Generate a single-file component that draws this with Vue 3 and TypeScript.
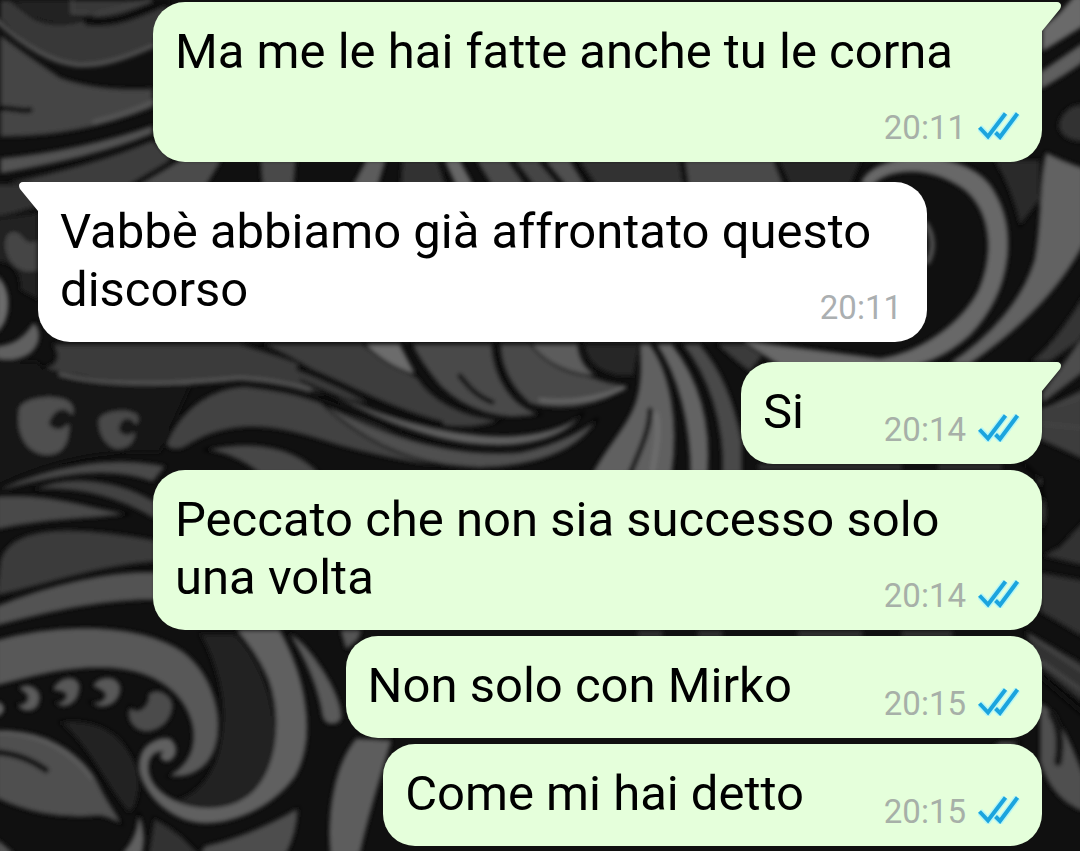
<script setup lang="ts">
interface Message {
  id: number
  text: string
  time: string
  outgoing: boolean
  tail: boolean
}

interface Shape {
  d: string
  fill: string
}

interface Line {
  d: string
  stroke: string
  width: number
}

const messages: Message[] = [
  { id: 1, text: 'Ma me le hai fatte anche tu le corna', time: '20:11', outgoing: true, tail: true },
  { id: 2, text: 'Vabbè abbiamo già affrontato questo discorso', time: '20:11', outgoing: false, tail: true },
  { id: 3, text: 'Si', time: '20:14', outgoing: true, tail: true },
  { id: 4, text: 'Peccato che non sia successo solo una volta', time: '20:14', outgoing: true, tail: false },
  { id: 5, text: 'Non solo con Mirko ', time: '20:15', outgoing: true, tail: false },
  { id: 6, text: 'Come mi hai detto', time: '20:15', outgoing: true, tail: false },
]

// Carved leaves of the wallpaper
const shapes: Shape[] = [
  // upper left
  { d: 'M0 0H170L153 46C120 62 95 67 75 65C50 62 25 45 0 20Z', fill: '#373737' },
  { d: 'M10 0H72V14L95 12C80 26 50 26 34 18Z', fill: '#242424' },
  { d: 'M0 34C25 54 45 66 60 77C90 88 120 90 153 88V108C110 125 60 138 0 137Z', fill: '#454545' },
  { d: 'M0 158C60 152 110 140 153 125V134C110 152 60 163 0 174Z', fill: '#525252' },
  { d: 'M0 184C60 172 110 158 153 140L172 160L128 186H0Z', fill: '#3e3e3e' },
  { d: 'M180 160H222L206 186H136Z', fill: '#4b4b4b' },
  { d: 'M-4 184H30L42 206C20 212 10 216 -4 218Z', fill: '#303030' },
  // strip between the first two bubbles
  { d: 'M260 160H296L294 186H262Z', fill: '#484848' },
  { d: 'M366 160H386L378 186H352Z', fill: '#5c5c5c' },
  { d: 'M402 160H438L446 186H400Z', fill: '#333' },
  { d: 'M444 160H460L474 186H456Z', fill: '#666' },
  { d: 'M476 160H508L526 186H492Z', fill: '#4a4a4a' },
  { d: 'M514 160H538L560 186H534Z', fill: '#444' },
  { d: 'M544 160H570L586 186H566Z', fill: '#505050' },
  { d: 'M578 160H680L684 186H596Z', fill: '#333' },
  { d: 'M684 160H774L784 186H688Z', fill: '#4a4a4a' },
  { d: 'M778 160H862L850 186H790Z', fill: '#262626' },
  // left edge curls
  { d: 'M-4 218L38 212V300L20 290C20 270 10 262 -4 262Z', fill: '#222' },
  { d: 'M4 250C2 236 8 226 20 232C26 240 30 244 38 238V272C22 276 8 268 4 250Z', fill: '#454545' },
  { d: 'M-4 274C14 290 12 320 -4 334Z', fill: '#6c6c6c' },
  { d: 'M-4 346C20 344 28 330 34 322C42 330 42 344 30 354C18 362 6 361 -4 359Z', fill: '#606060' },
  // middle left
  { d: 'M-4 362H36C80 390 130 390 190 386L160 452C110 450 60 456 -4 486Z', fill: '#191919' },
  { d: 'M52 344H240C300 360 350 384 420 414C350 404 300 384 240 380C180 388 110 386 40 368C58 366 60 356 52 344Z', fill: '#3b3b3b' },
  { d: 'M260 344H362C380 358 404 370 418 378C430 398 460 416 500 420C470 434 420 426 380 408C340 390 300 358 260 344Z', fill: '#3e3e3e' },
  { d: 'M166 444C180 410 210 386 250 386C300 390 350 414 400 434C450 450 480 458 510 462C460 474 400 462 340 446C290 430 240 414 190 444C180 452 168 450 166 444Z', fill: '#424242' },
  { d: 'M204 450C240 442 290 440 320 474H260C245 462 225 452 204 450Z', fill: '#464646' },
  { d: 'M364 344H400L416 375C396 370 378 358 364 344Z', fill: '#6c6c6c' },
  { d: 'M412 344H492C494 378 512 406 540 414C500 424 462 408 440 386C428 372 418 358 412 344Z', fill: '#484848' },
  { d: 'M500 344H536C552 364 580 374 608 382L628 386C600 408 560 412 530 404C510 388 500 364 500 344Z', fill: '#4a4a4a' },
  { d: 'M530 344H578C580 364 590 372 598 376C570 376 546 364 530 344Z', fill: '#5c5c5c' },
  { d: 'M584 344H640L634 376C606 378 586 366 584 344Z', fill: '#262626' },
  { d: 'M300 380C390 420 440 434 500 436C540 436 570 426 584 412C566 440 520 450 470 444C420 438 370 416 300 380Z', fill: '#5e5e5e' },
  { d: 'M320 402C400 444 460 456 520 452C560 444 590 426 598 418C580 450 540 466 480 468C420 466 370 448 320 402Z', fill: '#505050' },
  { d: 'M636 400C642 380 640 362 640 344H650C670 372 680 420 672 474H592C606 446 628 426 636 400Z', fill: '#606060' },
  { d: 'M656 344H672C700 380 712 424 708 474H690C690 424 678 376 656 344Z', fill: '#646464' },
  { d: 'M682 344H700C722 370 734 400 742 440V474H722C724 424 708 376 682 344Z', fill: '#484848' },
  { d: 'M716 344H772L750 372C738 364 728 354 716 344Z', fill: '#3a3a3a' },
  // dotted curls
  { d: 'M18 408C24 396 50 394 64 398C76 402 76 412 72 418C66 404 52 412 50 424C58 432 66 426 70 420C72 446 62 456 46 456C26 454 14 436 18 408Z', fill: '#505050' },
  { d: 'M98 418C104 410 126 406 138 414C142 420 138 424 136 428C130 414 120 420 120 430C126 438 134 432 136 428C138 444 128 450 116 450C104 446 96 434 98 418Z', fill: '#484848' },
  { d: 'M-4 490C50 466 110 454 166 466L153 482C110 466 60 474 -4 492Z', fill: '#484848' },
  { d: 'M32 490C70 472 120 480 156 502V520C120 498 80 486 32 490Z', fill: '#424242' },
  { d: 'M-4 496C50 492 90 508 130 514C90 520 50 518 -4 530Z', fill: '#484848' },
  { d: 'M0 560C10 528 60 522 156 540V562C100 566 50 584 -4 596Z', fill: '#3a3a3a' },
  { d: 'M-4 606C50 584 110 570 156 572V600C100 600 50 612 -4 626Z', fill: '#525252' },
  // large scroll at the lower left
  { d: 'M-4 640C60 622 140 622 184 652C214 676 224 716 216 746C210 768 190 780 168 776C186 766 196 750 192 726C184 690 150 668 100 668C60 668 28 678 -4 686Z', fill: '#585858' },
  { d: 'M200 634H236C280 680 286 760 262 796C250 808 236 812 216 812C200 812 180 808 168 800C190 800 214 780 220 740C228 700 214 660 200 634Z', fill: '#222' },
  { d: 'M236 630H280C306 676 318 736 296 776C270 812 220 832 184 820C150 806 134 776 140 756C144 742 160 736 170 738C180 746 178 758 168 762C160 762 158 756 162 752C146 752 144 776 160 790C180 808 220 814 246 796C276 774 282 720 268 680C260 660 248 644 236 630Z', fill: '#606060' },
  { d: 'M288 632C310 644 340 690 342 716C342 726 324 728 322 716C318 690 306 660 288 632Z', fill: '#5a5a5a' },
  { d: 'M340 630H362L358 640L346 650Z', fill: '#555' },
  { d: 'M60 722C100 716 126 736 138 770C142 790 136 812 128 812C108 790 92 750 60 722Z', fill: '#242424' },
  { d: 'M-4 732C40 726 80 750 98 782C106 800 116 812 122 824C112 820 106 816 98 816C60 820 24 812 -4 798Z', fill: '#505050' },
  { d: 'M-4 838L16 855H-4Z', fill: '#555' },
  { d: 'M138 812C144 824 146 840 142 855H120C134 842 138 828 138 812Z', fill: '#606060' },
  { d: 'M154 818C180 832 190 844 200 855H148Z', fill: '#303030' },
  { d: 'M204 846C240 838 270 824 298 808C298 824 294 840 286 855H200Z', fill: '#4e4e4e' },
  { d: 'M356 738C334 764 326 812 330 855H360C370 810 380 780 392 740Z', fill: '#5d5d5d' },
  { d: 'M-4 700C6 704 8 712 -4 718Z', fill: '#666' },
  { d: 'M18 688C30 680 42 690 40 700C38 714 22 714 16 704C24 706 30 700 26 694Z', fill: '#5c5c5c' },
  { d: 'M52 690C60 674 78 674 80 686C80 704 64 712 54 702C64 704 70 694 62 692Z', fill: '#585858' },
  { d: 'M92 686C100 674 118 674 121 688C120 706 102 712 90 702C104 704 110 694 100 690Z', fill: '#585858' },
  { d: 'M130 706C136 716 150 706 148 694C158 686 174 694 173 708C170 728 150 736 138 730C128 724 126 714 130 706Z', fill: '#4b4b4b' },
  // right side
  { d: 'M1042 28L1058 14L1074 -4H1084V26L1042 52Z', fill: '#6a6a6a' },
  { d: 'M1040 72L1084 42V62C1068 74 1054 82 1040 90Z', fill: '#5e5e5e' },
  { d: 'M1058 126C1060 112 1070 104 1084 104V142C1068 142 1060 136 1058 126Z', fill: '#333' },
  { d: 'M860 184C872 150 960 146 990 184C1020 226 1014 290 970 336C948 356 920 368 890 370L780 366L740 340L880 358C920 352 960 324 978 290C994 252 990 212 964 190C930 166 890 168 872 186Z', fill: '#686868' },
  { d: 'M994 160H1040V200L1020 226C1014 200 1006 180 994 160Z', fill: '#2b2b2b' },
  { d: 'M1046 152C1060 160 1072 164 1084 168V244C1060 290 1020 330 970 364H948C990 336 1022 300 1034 260C1042 220 1038 180 1046 152Z', fill: '#626262' },
  { d: 'M1084 294V338L1050 362H1030C1050 346 1066 324 1084 294Z', fill: '#343434' },
  { d: 'M1084 334V372L1042 404V392L1060 368Z', fill: '#4d4d4d' },
  { d: 'M1040 410L1084 388V460L1040 440Z', fill: '#3c3c3c' },
  { d: 'M1020 462C1044 474 1050 510 1042 534V480Z', fill: '#606060' },
  { d: 'M1060 546L1084 520V566L1042 556Z', fill: '#333' },
  { d: 'M1040 572L1084 580V638L1040 612Z', fill: '#303030' },
  { d: 'M1024 630L1084 664V704L1040 668Z', fill: '#303030' },
  { d: 'M1040 702C1060 714 1072 744 1084 776V812C1060 804 1046 784 1040 762Z', fill: '#505050' },
  { d: 'M1000 742H1022L1010 748H990Z', fill: '#555' },
]

// Ridges catching the light and deep grooves
const lines: Line[] = [
  { d: 'M-4 20C24 46 50 62 76 65C100 67 126 58 153 46', stroke: '#525252', width: 4 },
  { d: 'M72 0V13H100C124 8 140 2 150 0', stroke: '#444', width: 3 },
  { d: 'M88 21C116 24 140 12 164 2', stroke: '#0b0b0b', width: 9 },
  { d: 'M-4 108C12 107 20 112 30 110', stroke: '#060606', width: 5 },
  { d: 'M94 122C118 116 138 109 153 102', stroke: '#585858', width: 4 },
  { d: 'M60 374C110 388 180 384 240 378C270 380 290 384 310 390', stroke: '#5c5c5c', width: 3 },
  { d: 'M250 386C310 392 350 410 400 430', stroke: '#0a0a0a', width: 4 },
  { d: 'M300 368C340 382 380 408 440 424', stroke: '#0a0a0a', width: 7 },
  { d: 'M460 376C468 386 476 396 492 402', stroke: '#0a0a0a', width: 5 },
  { d: 'M540 400C570 404 600 398 624 388', stroke: '#6c6c6c', width: 3 },
  { d: 'M650 410C650 430 640 450 630 474', stroke: '#080808', width: 5 },
  { d: 'M656 414C660 430 656 450 652 474', stroke: '#717171', width: 4 },
  { d: 'M-4 752C20 754 34 762 46 770', stroke: '#090909', width: 6 },
  { d: 'M-4 732C40 732 70 750 92 778', stroke: '#5f5f5f', width: 3 },
  { d: 'M1042 410L1084 396M1042 424L1084 428', stroke: '#484848', width: 2 },
  { d: 'M1030 636L1084 672M1042 662L1084 692', stroke: '#555', width: 2 },
  { d: 'M1040 676L1084 714', stroke: '#080808', width: 5 },
  { d: 'M1052 714C1062 730 1060 750 1058 762', stroke: '#151515', width: 8 },
  { d: 'M928 262C934 250 934 236 926 224', stroke: '#555', width: 5 },
  { d: 'M640 634H660M700 634H720M800 634H860M904 634H950', stroke: '#333', width: 6 },
  { d: 'M760 467H900M940 467H1000', stroke: '#333', width: 5 },
]
</script>

<template>
  <main class="chat">
    <svg class="wallpaper" viewBox="0 0 1080 851" preserveAspectRatio="xMidYMid slice" aria-hidden="true">
      <defs>
        <filter id="soften" x="-5%" y="-5%" width="110%" height="110%">
          <feGaussianBlur stdDeviation="2" />
        </filter>
      </defs>
      <rect width="1080" height="851" fill="#101010" />
      <g filter="url(#soften)">
        <path
          v-for="(shape, i) in shapes"
          :key="`s${i}`"
          :d="shape.d"
          :fill="shape.fill"
          stroke="#0a0a0a"
          stroke-width="2"
        />
        <path
          v-for="(line, i) in lines"
          :key="`l${i}`"
          :d="line.d"
          :stroke="line.stroke"
          :stroke-width="line.width"
          fill="none"
          stroke-linecap="round"
        />
      </g>
    </svg>

    <article
      v-for="message in messages"
      :key="message.id"
      class="bubble"
      :class="{ outgoing: message.outgoing, incoming: !message.outgoing, tailed: message.tail }"
    >
      <svg v-if="message.tail" class="tail" viewBox="0 0 20 30" aria-hidden="true">
        <path d="M0 0H16C20 0 21 4 19 7L1 29V30H0Z" />
      </svg>
      <p class="text">{{ message.text }}<span class="reserve"></span></p>
      <footer class="meta">
        <time>{{ message.time }}</time>
        <svg v-if="message.outgoing" class="ticks" viewBox="0 0 42 28" role="img" aria-label="Letto">
          <path class="glow" d="M1.5 15.5L10 24.5L27.5 1.5M17.5 20.5L22 25L39.5 1.5" />
          <path d="M1.5 15.5L10 24.5L27.5 1.5M17.5 20.5L22 25L39.5 1.5" />
        </svg>
      </footer>
    </article>
  </main>
</template>

<style>
body {
  margin: 0;
  background: #101010;
}
</style>

<style scoped>
.chat {
  position: relative;
  box-sizing: border-box;
  min-height: 100vh;
  display: flex;
  flex-direction: column;
  gap: 6px;
  padding: 2px 38px 5px;
  overflow: hidden;
  font-family: Roboto, "Liberation Sans", sans-serif;
}

.wallpaper {
  position: absolute;
  inset: 0;
  width: 100%;
  height: 100%;
}

.bubble {
  position: relative;
  display: grid;
  box-sizing: border-box;
  padding: 21px 22px 20px;
  border-radius: 32px;
}

.outgoing {
  align-self: flex-end;
  margin-left: 115px;
  background: #e5ffdb;
  color: #000;
}

.incoming {
  align-self: flex-start;
  margin-right: 115px;
  padding-right: 25px;
  background: #fff;
  color: #000;
}

.bubble.tailed:not(:nth-of-type(1)) {
  margin-top: 14px;
}

.outgoing.tailed {
  border-top-right-radius: 0;
}

.incoming.tailed {
  border-top-left-radius: 0;
}

.tail {
  position: absolute;
  top: 0;
  left: calc(100% - 1px);
  width: 20px;
  height: 30px;
  fill: #e5ffdb;
}

.incoming .tail {
  left: auto;
  right: calc(100% - 1px);
  fill: #fff;
  transform: scaleX(-1);
}

.text {
  grid-area: 1 / 1;
  margin: 0 0 3px;
  font-size: 49px;
  line-height: 58px;
  white-space: pre-wrap;
}

.reserve {
  display: inline-block;
  width: 216px;
}

.incoming .reserve {
  width: 120px;
}

.meta {
  grid-area: 1 / 1;
  place-self: end;
  display: flex;
  align-items: center;
  gap: 12px;
  height: 28px;
  color: #a7b0a8;
  font-size: 33px;
  line-height: 28px;
}

.incoming .meta {
  color: #abafb1;
}

.ticks {
  width: 42px;
  height: 28px;
  margin-bottom: 4px;
  fill: none;
  stroke: #1ba4de;
  stroke-width: 4;
}

.glow {
  stroke: #b9f7f5;
  stroke-width: 7;
}
</style>
